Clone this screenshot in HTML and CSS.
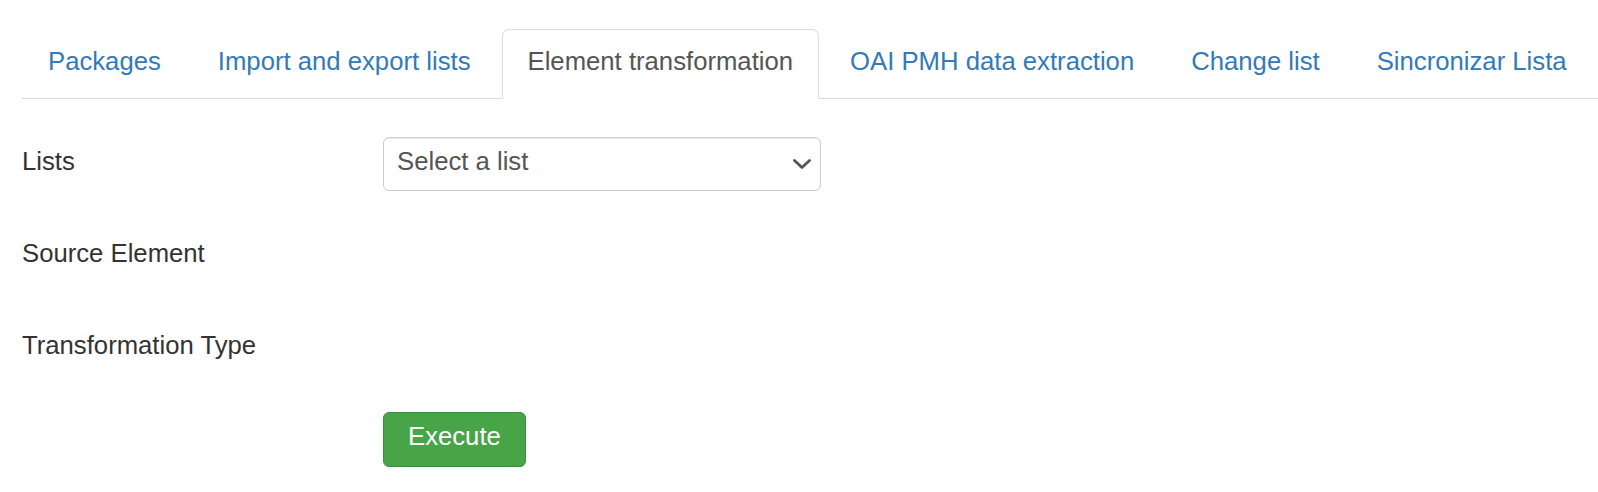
FILE: index.html
```html
<!DOCTYPE html>
<html>
<head>
<meta charset="utf-8">
<link rel="stylesheet" href="styles.css">
</head>
<body>
<div class="page">
  <ul class="tabs">
    <li class="tab"><a href="#">Packages</a></li>
    <li class="tab"><a href="#">Import and export lists</a></li>
    <li class="tab active"><a href="#">Element transformation</a></li>
    <li class="tab"><a href="#">OAI PMH data extraction</a></li>
    <li class="tab"><a href="#">Change list</a></li>
    <li class="tab"><a href="#">Sincronizar Lista</a></li>
  </ul>
  <form class="form">
    <div class="row">
      <label class="label">Lists</label>
      <div class="select-wrap">
        <select class="select">
          <option>Select a list</option>
        </select>
        <svg class="chevron" width="18" height="10" viewBox="0 0 18 10"><path d="M1.5 1.5 L9 8.5 L16.5 1.5" fill="none" stroke="#555" stroke-width="2.8" stroke-linecap="round" stroke-linejoin="round"/></svg>
      </div>
    </div>
    <div class="row">
      <label class="label">Source Element</label>
    </div>
    <div class="row">
      <label class="label">Transformation Type</label>
    </div>
    <div class="row">
      <div class="label"></div>
      <button type="button" class="btn">Execute</button>
    </div>
  </form>
</div>
</body>
</html>
```
FILE: styles.css
```css
html, body {
  margin: 0;
  padding: 0;
  background: #fff;
}
body {
  font-family: "Liberation Sans", Arial, sans-serif;
  font-size: 25.7px;
  color: #333;
  overflow: hidden;
}
.page {
  padding: 29px 0 0 22px;
}
.tabs {
  list-style: none;
  margin: 0;
  padding: 0;
  display: flex;
  border-bottom: 1px solid #ddd;
}
.tab {
  flex: none;
  margin: 0 5px -1px 0;
}
.tab a {
  display: block;
  white-space: nowrap;
  padding: 13px 25px 19px;
  line-height: 36px;
  border: 1px solid transparent;
  border-radius: 7px 7px 0 0;
  color: #337ab7;
  text-decoration: none;
}
.tab.active a {
  color: #555;
  background: #fff;
  border-color: #ddd #ddd transparent;
  border-bottom-color: #fff;
}
.form {
  margin-top: 38px;
}
.row {
  display: flex;
  align-items: center;
  min-height: 54px;
  margin-bottom: 38px;
}
.label {
  width: 361px;
  flex: none;
  line-height: 36px;
  padding-bottom: 7px;
  white-space: nowrap;
}
.select-wrap {
  position: relative;
  width: 438px;
  height: 54px;
}
.select {
  -webkit-appearance: none;
  appearance: none;
  box-sizing: border-box;
  width: 100%;
  height: 54px;
  padding: 0 40px 6px 13px;
  border: 1px solid #ccc;
  border-radius: 6px;
  background: #fff;
  font-family: "Liberation Sans", Arial, sans-serif;
  font-size: 25.7px;
  color: #555;
  box-shadow: inset 0 1px 1px rgba(0,0,0,0.075);
}
.chevron {
  position: absolute;
  right: 10px;
  top: 22px;
  pointer-events: none;
}
.btn {
  box-sizing: border-box;
  height: 55px;
  margin-top: -2px;
  padding: 0 24px 7px;
  border: 1px solid #3d8b3d;
  border-radius: 6px;
  background: #47a447;
  color: #fff;
  font-family: "Liberation Sans", Arial, sans-serif;
  font-size: 25.7px;
  line-height: 36px;
  white-space: nowrap;
}
```
